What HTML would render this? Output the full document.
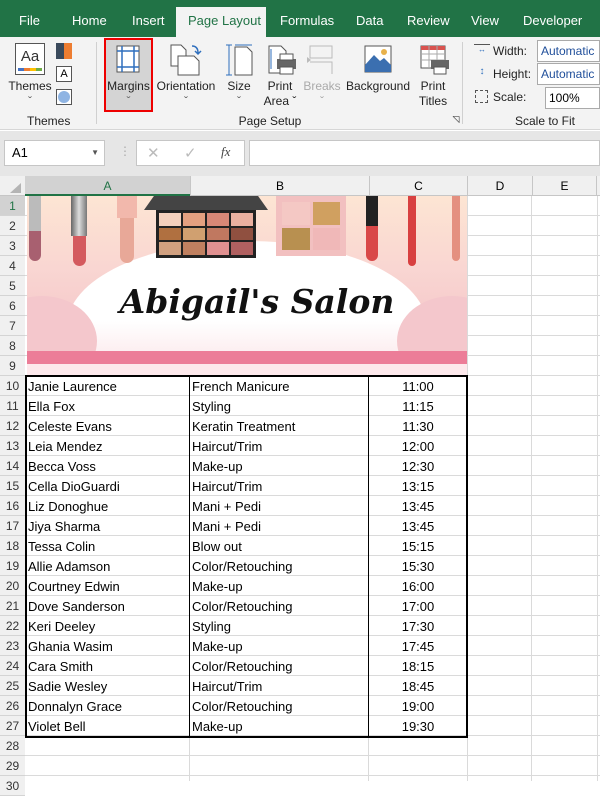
<!DOCTYPE html>
<html><head><meta charset="utf-8"><style>
*{margin:0;padding:0;box-sizing:border-box}
body{width:600px;height:781px;overflow:hidden;background:#fff;font-family:"Liberation Sans",sans-serif;position:relative}
.a{position:absolute}
.tab{position:absolute;top:0;height:37px;line-height:42px;color:#fff;font-size:13px}
.rb{font-size:12px;color:#222;position:absolute;text-align:center}
.cell{position:absolute;font-size:13px;color:#000;white-space:nowrap}
.rh{position:absolute;left:0;width:25px;text-align:center;font-size:12px;color:#333;border-bottom:1px solid #d4d4d4;background:#f0f0f0;height:20px;line-height:20px}
</style></head><body>
<div class="a" style="left:0;top:0;width:600px;height:37px;background:#217346"></div>
<div class="tab" style="left:19px">File</div>
<div class="tab" style="left:72px">Home</div>
<div class="tab" style="left:132px">Insert</div>
<div class="a" style="left:176px;top:7px;width:90px;height:30px;background:#f3f3f3"></div>
<div class="tab" style="left:188px;color:#217346">Page Layout</div>
<div class="tab" style="left:280px">Formulas</div>
<div class="tab" style="left:356px">Data</div>
<div class="tab" style="left:407px">Review</div>
<div class="tab" style="left:471px">View</div>
<div class="tab" style="left:523px">Developer</div>
<div class="a" style="left:0;top:37px;width:600px;height:93px;background:#f3f3f3;border-bottom:1px solid #d6d6d6"></div>
<div class="a" style="left:15px;top:43px;width:30px;height:32px;border:1px solid #555;background:#fff;font-size:15px;text-align:center;line-height:26px;color:#333">Aa</div>
<div class="a" style="left:18px;top:68px;width:24px;height:3px;background:linear-gradient(90deg,#4472c4 25%,#ed7d31 25% 50%,#ffc000 50% 75%,#70ad47 75%)"></div>
<div class="rb" style="left:5px;top:79px;width:50px">Themes</div>
<div class="rb" style="left:5px;top:94px;width:50px;color:#666">ˇ</div>
<div class="a" style="left:56px;top:43px;width:16px;height:16px;background:linear-gradient(90deg,#3a4a5c 50%,#ed7d31 50%)"></div>
<div class="a" style="left:56px;top:66px;width:16px;height:16px;border:1px solid #555;background:#fff;font-size:11px;text-align:center;line-height:14px">A</div>
<div class="a" style="left:56px;top:89px;width:16px;height:16px;border:1px solid #555;background:#fff"><div style="margin:1px;width:12px;height:12px;border-radius:50%;background:#8fb4e3"></div></div>
<div class="rb" style="left:27px;top:114px;width:40px">Themes</div>
<div class="a" style="left:96px;top:42px;width:1px;height:82px;background:#d0d0d0"></div>
<div class="a" style="left:104px;top:38px;width:49px;height:74px;background:#d4d4d4;border:2px solid #e00"></div>
<svg class="a" style="left:116px;top:45px" width="24" height="28"><rect x="1" y="1" width="22" height="26" fill="#fff" stroke="#555"/><path d="M6 1V27M18 1V27M1 6H23M1 22H23" stroke="#2f6fbd" stroke-width="1.5"/></svg>
<div class="rb" style="left:105px;top:79px;width:47px">Margins</div>
<div class="rb" style="left:105px;top:94px;width:47px;color:#666">ˇ</div>
<svg class="a" style="left:170px;top:44px" width="32" height="32"><path d="M1 1h10l5 5v16H1z" fill="#fff" stroke="#555"/><path d="M8 12h16l5 5v14H8z" fill="#fff" stroke="#555"/><path d="M22 2q6 0 6 7m-3-2l3 3 3-3" fill="none" stroke="#2f6fbd" stroke-width="1.5"/></svg>
<div class="rb" style="left:155px;top:79px;width:62px">Orientation</div>
<div class="rb" style="left:155px;top:94px;width:62px;color:#666">ˇ</div>
<svg class="a" style="left:226px;top:44px" width="28" height="32"><path d="M3 1v30M0 1h6M0 31h6M3 1" stroke="#2f6fbd"/><path d="M9 3h12l5 5v23H9z" fill="#fff" stroke="#555"/><path d="M9 1h17" stroke="#2f6fbd"/></svg>
<div class="rb" style="left:222px;top:79px;width:34px">Size</div>
<div class="rb" style="left:222px;top:94px;width:34px;color:#666">ˇ</div>
<svg class="a" style="left:267px;top:45px" width="30" height="30"><path d="M2 1h12l5 5v22H2z" fill="#fff" stroke="#555"/><path d="M4 4v20" stroke="#2f6fbd"/><rect x="10" y="14" width="19" height="10" fill="#666"/><rect x="13" y="9" width="13" height="6" fill="#fff" stroke="#555"/><rect x="13" y="22" width="13" height="7" fill="#fff" stroke="#555"/></svg>
<div class="rb" style="left:260px;top:79px;width:40px">Print</div>
<div class="rb" style="left:260px;top:94px;width:40px">Area ˇ</div>
<svg class="a" style="left:306px;top:44px" width="28" height="30"><path d="M4 2h22v12H4zM4 18h22v12" fill="none" stroke="#bbb"/><path d="M1 13l4 3-4 3z" fill="#bbb"/></svg>
<div class="rb" style="left:302px;top:79px;width:40px;color:#aaa">Breaks</div>
<div class="rb" style="left:302px;top:94px;width:40px;color:#aaa">ˇ</div>
<svg class="a" style="left:364px;top:45px" width="28" height="28"><rect x="1" y="1" width="26" height="26" fill="#fff" stroke="#555"/><path d="M1 20l9-10 6 6 4-3 7 7v7H1z" fill="#3b6fb0"/><circle cx="20" cy="7" r="3" fill="#e8b24c"/></svg>
<div class="rb" style="left:345px;top:79px;width:66px">Background</div>
<svg class="a" style="left:420px;top:45px" width="30" height="30"><rect x="1" y="1" width="24" height="22" fill="#fff" stroke="#555"/><path d="M1 1h24v4H1z" fill="#d9534f"/><path d="M9 1v22M17 1v22M1 9h24M1 15h24" stroke="#aaa"/><rect x="11" y="15" width="18" height="9" fill="#666"/><rect x="14" y="22" width="12" height="7" fill="#fff" stroke="#555"/></svg>
<div class="rb" style="left:413px;top:79px;width:40px">Print</div>
<div class="rb" style="left:413px;top:94px;width:40px">Titles</div>
<div class="rb" style="left:215px;top:114px;width:110px">Page Setup</div>
<div class="rb" style="left:450px;top:114px;width:12px;font-size:9px">◹</div>
<div class="a" style="left:462px;top:42px;width:1px;height:82px;background:#d0d0d0"></div>
<div class="rb" style="left:474px;top:44px;width:16px;height:14px;border-top:1px solid #555;font-size:8px;color:#2f6fbd">↔</div>
<div class="rb" style="left:493px;top:44px;text-align:left">Width:</div>
<div class="a" style="left:537px;top:40px;width:63px;height:22px;background:#fff;border:1px solid #aaa;font-size:12px;line-height:20px;padding-left:3px;color:#1f4e9a">Automatic</div>
<div class="rb" style="left:474px;top:66px;width:16px;font-size:10px;color:#2f6fbd">↕</div>
<div class="rb" style="left:493px;top:67px;text-align:left">Height:</div>
<div class="a" style="left:537px;top:63px;width:63px;height:22px;background:#fff;border:1px solid #aaa;font-size:12px;line-height:20px;padding-left:3px;color:#1f4e9a">Automatic</div>
<div class="a" style="left:475px;top:90px;width:13px;height:13px;border:1px dashed #555"></div>
<div class="rb" style="left:493px;top:90px;text-align:left">Scale:</div>
<div class="a" style="left:545px;top:87px;width:55px;height:22px;background:#fff;border:1px solid #aaa;font-size:12px;line-height:20px;padding-left:3px">100%</div>
<div class="rb" style="left:490px;top:114px;width:110px">Scale to Fit</div>
<div class="a" style="left:0;top:131px;width:600px;height:45px;background:#e6e6e6"></div>
<div class="a" style="left:4px;top:140px;width:101px;height:26px;background:#fff;border:1px solid #c6c6c6;font-size:13px;line-height:24px;padding-left:7px">A1<span style="position:absolute;right:5px;top:0;font-size:8px;color:#555">▼</span></div>
<div class="a" style="left:119px;top:144px;font-size:12px;color:#aaa">⋮</div>
<div class="a" style="left:136px;top:140px;width:109px;height:26px;background:#fff;border:1px solid #c6c6c6"></div>
<div class="a" style="left:147px;top:144px;font-size:15px;color:#bbb">✕</div>
<div class="a" style="left:184px;top:144px;font-size:15px;color:#bbb">✓</div>
<div class="a" style="left:221px;top:144px;font-size:13px;color:#444;font-style:italic;font-family:'Liberation Serif',serif">fx</div>
<div class="a" style="left:249px;top:140px;width:351px;height:26px;background:#fff;border:1px solid #c6c6c6"></div>
<div class="a" style="left:0;top:176px;width:600px;height:20px;background:#f0f0f0;border-bottom:1px solid #c6c6c6"></div>
<svg class="a" style="left:8px;top:182px" width="14" height="12"><path d="M13 1V11H2z" fill="#b4b4b4"/></svg>
<div class="a" style="left:25px;top:176px;width:165px;height:20px;background:#d2d2d2;border-bottom:2px solid #217346;text-align:center;font-size:12px;line-height:20px;color:#217346">A</div>
<div class="a" style="left:190px;top:176px;width:179px;height:20px;text-align:center;font-size:12px;line-height:20px;border-left:1px solid #c6c6c6">B</div>
<div class="a" style="left:369px;top:176px;width:98px;height:20px;text-align:center;font-size:12px;line-height:20px;border-left:1px solid #c6c6c6">C</div>
<div class="a" style="left:467px;top:176px;width:65px;height:20px;text-align:center;font-size:12px;line-height:20px;border-left:1px solid #c6c6c6">D</div>
<div class="a" style="left:532px;top:176px;width:65px;height:20px;text-align:center;font-size:12px;line-height:20px;border-left:1px solid #c6c6c6;border-right:1px solid #c6c6c6">E</div>
<div class="a" style="left:25px;top:196px;width:575px;height:585px;background-image:repeating-linear-gradient(180deg,transparent 0 19px,#dadada 19px 20px)"></div>
<div class="a" style="left:189px;top:196px;width:1px;height:585px;background:#dadada"></div>
<div class="a" style="left:368px;top:196px;width:1px;height:585px;background:#dadada"></div>
<div class="a" style="left:467px;top:196px;width:1px;height:585px;background:#dadada"></div>
<div class="a" style="left:531px;top:196px;width:1px;height:585px;background:#dadada"></div>
<div class="a" style="left:597px;top:196px;width:1px;height:585px;background:#dadada"></div>
<div class="a" style="left:0;top:196px;width:25px;height:585px;background:#f0f0f0;border-right:1px solid #c6c6c6"></div>
<div id="rh"></div>
<div class="a" style="left:27px;top:196px;width:440px;height:180px;overflow:hidden;background:linear-gradient(180deg,#fde5d3 0%,#f9d6d2 40%,#f2bcc3 100%)">
<div class="a" style="left:40px;top:45px;width:360px;height:170px;border-radius:50%;background:#fff"></div>
<div class="a" style="left:0;top:125px;width:440px;height:45px;background:linear-gradient(180deg,#fff,#fbe7ea)"></div>
<div class="a" style="left:-40px;top:100px;width:110px;height:90px;border-radius:50%;background:#f4c7cc"></div>
<div class="a" style="left:370px;top:100px;width:110px;height:90px;border-radius:50%;background:#f4c7cc"></div>
<div class="a" style="left:0;top:155px;width:440px;height:13px;background:#ec7d98"></div>
<div class="a" style="left:0;top:168px;width:440px;height:12px;background:#fde9ec"></div>
<div class="a" style="left:2px;top:0;width:12px;height:35px;background:#bbb"></div><div class="a" style="left:2px;top:35px;width:12px;height:30px;background:#a86070;border-radius:0 0 6px 6px"></div>
<div class="a" style="left:44px;top:0;width:16px;height:40px;background:linear-gradient(90deg,#666,#ddd,#777)"></div><div class="a" style="left:46px;top:40px;width:13px;height:30px;background:#d45a5e;border-radius:0 0 7px 7px"></div>
<div class="a" style="left:90px;top:0;width:20px;height:22px;background:#f2b8ac"></div><div class="a" style="left:93px;top:22px;width:14px;height:45px;background:#e8a898;border-radius:0 0 7px 7px"></div>
<div class="a" style="left:117px;top:0;width:124px;height:14px;background:#444;clip-path:polygon(8% 0,92% 0,100% 100%,0 100%)"></div>
<div class="a" style="left:129px;top:14px;width:100px;height:48px;background:#222;padding:3px;display:grid;grid-template-columns:repeat(4,1fr);gap:2px">
<i style="background:#f4d0bc"></i><i style="background:#e4a080"></i><i style="background:#d88877"></i><i style="background:#eab0a0"></i>
<i style="background:#b07040"></i><i style="background:#d0a070"></i><i style="background:#c07860"></i><i style="background:#905040"></i>
<i style="background:#d0a080"></i><i style="background:#c08060"></i><i style="background:#e09090"></i><i style="background:#b06060"></i></div>
<div class="a" style="left:249px;top:0;width:70px;height:60px;background:#f2c0c0;padding:6px;display:grid;grid-template-columns:1fr 1fr;gap:3px">
<i style="background:#f4c8c4"></i><i style="background:#d0a060"></i><i style="background:#b89050"></i><i style="background:#f0b8b8"></i></div>
<div class="a" style="left:339px;top:0;width:12px;height:30px;background:#222"></div><div class="a" style="left:339px;top:30px;width:12px;height:35px;background:#d94848;border-radius:0 0 6px 6px"></div>
<div class="a" style="left:381px;top:0;width:8px;height:70px;background:#d84040;border-radius:0 0 4px 4px"></div>
<div class="a" style="left:425px;top:0;width:8px;height:65px;background:#e49080;border-radius:0 0 4px 4px"></div>
<div class="a" style="left:60px;top:86px;width:340px;text-align:center;white-space:nowrap;font-family:'DejaVu Serif',serif;font-style:italic;font-weight:bold;font-size:33px;color:#111">Abigail's Salon</div>
</div>
<div class="a" style="left:25px;top:375px;width:443px;height:363px;border:2px solid #000"></div>
<div class="a" style="left:189px;top:376px;width:1px;height:361px;background:#000"></div>
<div class="a" style="left:368px;top:376px;width:1px;height:361px;background:#000"></div>
<div id="t"></div>
<script>
var rh='';for(var i=1;i<=30;i++){rh+='<div class="rh" style="top:'+(176+i*20)+'px;'+(i==1?'background:#d2d2d2;color:#217346':'')+'">'+i+'</div>';}
document.getElementById('rh').outerHTML=rh;
var d=[["Janie Laurence","French Manicure","11:00"],["Ella Fox","Styling","11:15"],["Celeste Evans","Keratin Treatment","11:30"],["Leia Mendez","Haircut/Trim","12:00"],["Becca Voss","Make-up","12:30"],["Cella DioGuardi","Haircut/Trim","13:15"],["Liz Donoghue","Mani + Pedi","13:45"],["Jiya Sharma","Mani + Pedi","13:45"],["Tessa Colin","Blow out","15:15"],["Allie Adamson","Color/Retouching","15:30"],["Courtney Edwin","Make-up","16:00"],["Dove Sanderson","Color/Retouching","17:00"],["Keri Deeley","Styling","17:30"],["Ghania Wasim","Make-up","17:45"],["Cara Smith","Color/Retouching","18:15"],["Sadie Wesley","Haircut/Trim","18:45"],["Donnalyn Grace","Color/Retouching","19:00"],["Violet Bell","Make-up","19:30"]];
var h='';d.forEach(function(r,i){var y=376+i*20+3;h+='<div class="cell" style="left:28px;top:'+y+'px">'+r[0]+'</div><div class="cell" style="left:192px;top:'+y+'px">'+r[1]+'</div><div class="cell" style="left:369px;width:98px;text-align:center;top:'+y+'px">'+r[2]+'</div>';});
document.getElementById('t').outerHTML=h;
</script>
</body></html>
